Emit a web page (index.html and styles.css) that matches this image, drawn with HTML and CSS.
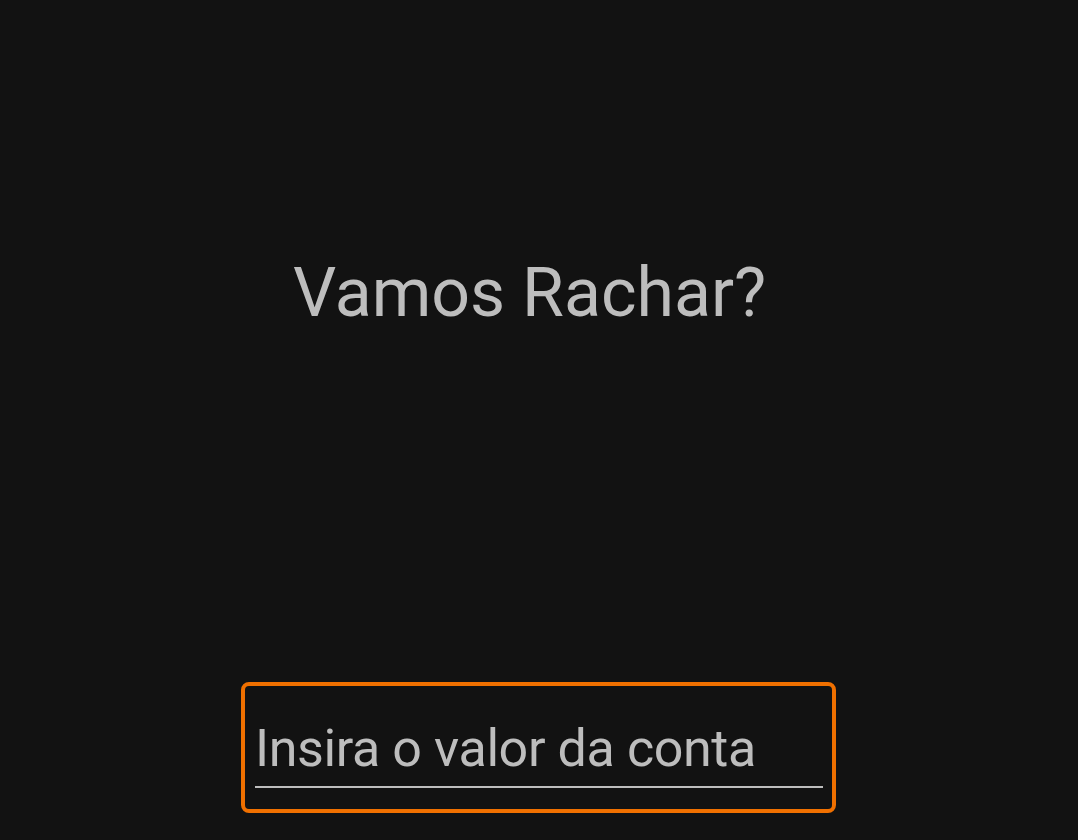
FILE: index.html
```html
<!DOCTYPE html>
<html lang="pt">
<head>
<meta charset="utf-8">
<link rel="stylesheet" href="styles.css">
</head>
<body>
<main class="screen">
  <h1 class="title">Vamos Rachar?</h1>
  <div class="field">
    <div class="input">Insira o valor da conta</div>
  </div>
</main>
</body>
</html>
```
FILE: styles.css
```css
html, body {
  margin: 0;
  padding: 0;
  background: #121212;
  height: 100%;
}
.screen {
  height: 840px;
  display: flex;
  flex-direction: column;
  align-items: center;
  font-family: Roboto, "Liberation Sans", sans-serif;
  color: #bdbdbd;
}
.title {
  margin: 253px 0 0 0;
  font-size: 68px;
  font-weight: 400;
  line-height: 80px;
  padding-right: 19px;
}
.field {
  margin-top: 349px;
  margin-right: 1px;
  width: 568px;
  height: 123px;
  border: 4px solid #f07000;
  border-radius: 8px;
  padding: 0 9px 0 10px;
  display: flex;
  flex-direction: column;
  justify-content: flex-end;
}
.input {
  font-size: 52px;
  line-height: 60px;
  border-bottom: 2px solid #bdbdbd;
  padding: 0 0 7px 0;
  margin-bottom: 21px;
  letter-spacing: -0.4px;
}
```
